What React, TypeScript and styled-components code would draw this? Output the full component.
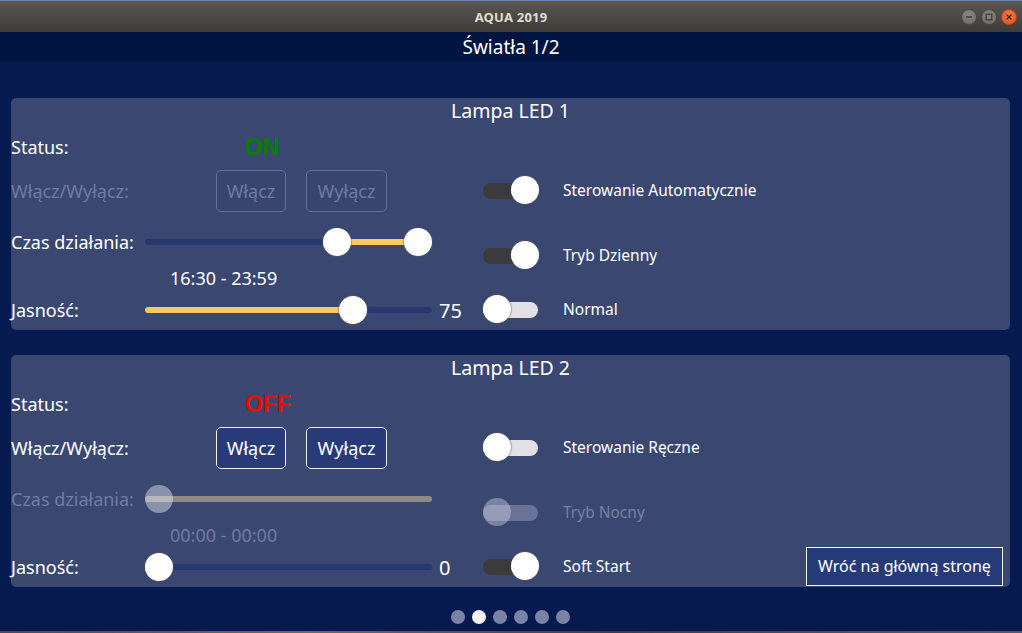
import React from 'react';
import styled, { createGlobalStyle } from 'styled-components';

const Global = createGlobalStyle`
  html, body { margin: 0; padding: 0; background: #061a4f; }
  body { font-family: "Noto Sans", "Open Sans", sans-serif; overflow: hidden; }
  * { box-sizing: border-box; }
`;

const Window = styled.div`
  width: 1022px;
  height: 633px;
  display: flex;
  flex-direction: column;
  background: #061a4f;
`;

const TitleBar = styled.div`
  height: 32px;
  flex: none;
  border-top: 1px solid #6a84ad;
  background: linear-gradient(#5b5852, #3d3b37);
  display: grid;
  grid-template-columns: 1fr auto 1fr;
  align-items: center;
`;

const TitleText = styled.div`
  grid-column: 2;
  color: #dfdbd2;
  font-weight: bold;
  font-size: 13px;
  letter-spacing: 0.2px;
`;

const Controls = styled.div`
  grid-column: 3;
  justify-self: end;
  display: flex;
  gap: 4px;
  margin-right: 5px;
`;

const Ctl = styled.div<{ $close?: boolean }>`
  width: 16px;
  height: 16px;
  border-radius: 50%;
  display: flex;
  align-items: center;
  justify-content: center;
  background: ${(p) => (p.$close ? 'radial-gradient(circle at 50% 35%, #f47a45, #e2521c)' : 'radial-gradient(circle at 50% 35%, #8a8782, #6c6a65)')};
  border: 1px solid ${(p) => (p.$close ? '#b8441a' : '#4a4844')};
`;

const Header = styled.div`
  height: 29px;
  flex: none;
  background: #001442;
  color: #ffffff;
  font-size: 19px;
  display: flex;
  align-items: center;
  justify-content: center;
`;

const Content = styled.div`
  flex: 1;
  display: flex;
  flex-direction: column;
  gap: 25px;
  padding: 37px 12px 0 11px;
`;

const Card = styled.div`
  height: 232px;
  background: #3a4770;
  border-radius: 5px;
  display: grid;
  grid-template-columns: 472px 1fr;
  grid-template-rows: 26px 1fr;
  color: #ffffff;
`;

const CardTitle = styled.div`
  grid-column: 1 / -1;
  text-align: center;
  font-size: 19.5px;
  line-height: 26px;
`;

const Column = styled.div`
  display: flex;
  flex-direction: column;
`;

const Row = styled.div<{ $h: number; $mt?: number }>`
  height: ${(p) => p.$h}px;
  margin-top: ${(p) => p.$mt ?? 0}px;
  display: flex;
  align-items: center;
`;

const Label = styled.div<{ $disabled?: boolean }>`
  width: 134px;
  flex: none;
  font-size: 18px;
  color: ${(p) => (p.$disabled ? '#6f7b9f' : '#ffffff')};
  white-space: nowrap;
`;

const StatusValue = styled.div<{ $on: boolean }>`
  margin-left: 100px;
  font-family: "Liberation Sans", Arial, sans-serif;
  font-weight: bold;
  font-size: 23px;
  color: ${(p) => (p.$on ? '#008000' : '#ff0000')};
`;

const ButtonGroup = styled.div`
  margin-left: 71px;
  display: flex;
  gap: 20px;
`;

const Btn = styled.div<{ $w: number; $disabled?: boolean }>`
  width: ${(p) => p.$w}px;
  height: 42px;
  border-radius: 5px;
  border: 1px solid ${(p) => (p.$disabled ? '#65709a' : '#eeeeee')};
  background: ${(p) => (p.$disabled ? '#38456f' : '#283b78')};
  color: ${(p) => (p.$disabled ? '#6f7b9f' : '#ffffff')};
  font-size: 18px;
  display: flex;
  align-items: center;
  justify-content: center;
`;

const SliderBox = styled.div`
  position: relative;
  width: 287px;
  height: 28px;
  flex: none;
`;

const Track = styled.div<{ $disabled?: boolean }>`
  position: absolute;
  left: 0;
  right: 0;
  top: 11px;
  height: 6px;
  border-radius: 3px;
  background: ${(p) => (p.$disabled ? '#8f8a86' : '#26386f')};
`;

const Fill = styled.div`
  position: absolute;
  top: 11px;
  height: 6px;
  border-radius: 3px;
  background: #fdc85e;
`;

const Handle = styled.div<{ $disabled?: boolean }>`
  position: absolute;
  top: 0;
  width: 28px;
  height: 28px;
  margin-left: -14px;
  border-radius: 50%;
  background: ${(p) => (p.$disabled ? 'rgba(235, 238, 248, 0.45)' : '#ffffff')};
  box-shadow: ${(p) => (p.$disabled ? 'none' : '0 0 1px 1px rgba(90, 90, 90, 0.45)')};
`;

const SliderValue = styled.div`
  margin-left: 7px;
  font-size: 20px;
`;

const TimeText = styled.div<{ $disabled?: boolean }>`
  padding-left: 159px;
  font-size: 18px;
  color: ${(p) => (p.$disabled ? '#6f7b9f' : '#ffffff')};
`;

const ToggleBox = styled.div`
  position: relative;
  width: 56px;
  height: 28px;
  flex: none;
`;

const ToggleTrack = styled.div<{ $on: boolean; $disabled?: boolean }>`
  position: absolute;
  left: 0;
  right: 1px;
  top: 7px;
  height: 16px;
  border-radius: 8px;
  background: ${(p) => (p.$disabled ? '#6a7397' : p.$on ? '#3b3b3d' : '#e1e1e3')};
`;

const Knob = styled.div<{ $on: boolean; $disabled?: boolean }>`
  position: absolute;
  top: 0;
  left: ${(p) => (p.$on ? 28 : 0)}px;
  width: 28px;
  height: 28px;
  border-radius: 50%;
  background: ${(p) => (p.$disabled ? 'rgba(200, 206, 226, 0.45)' : '#ffffff')};
  box-shadow: ${(p) => (p.$disabled ? 'none' : '0 0 1px 1px rgba(90, 90, 90, 0.4)')};
`;

const ToggleLabel = styled.div<{ $disabled?: boolean }>`
  margin-left: 24px;
  font-size: 15.5px;
  color: ${(p) => (p.$disabled ? '#7580a4' : '#ffffff')};
`;

const BackButton = styled.div`
  margin-left: auto;
  margin-right: 7px;
  width: 197px;
  height: 39px;
  border: 1.5px solid #f4f4f4;
  background: #263a78;
  color: #ffffff;
  font-size: 16px;
  display: flex;
  align-items: center;
  justify-content: center;
`;

const Dots = styled.div`
  margin-top: -2px;
  display: flex;
  justify-content: center;
  gap: 7px;
`;

const Dot = styled.div<{ $active?: boolean }>`
  width: 14px;
  height: 14px;
  border-radius: 50%;
  background: ${(p) => (p.$active ? '#f2f2f6' : '#7a83a4')};
`;

const Wallpaper = styled.div`
  height: 2px;
  flex: none;
  background: linear-gradient(90deg, #4b4c43, #6a6a5e 30%, #3e4038 60%, #5c5d52);
`;

const TRAVEL = 287 - 28;
const pos = (f: number) => 14 + f * TRAVEL;

function Toggle({ on, disabled }: { on: boolean; disabled?: boolean }) {
  return (
    <ToggleBox>
      <ToggleTrack $on={on} $disabled={disabled} />
      <Knob $on={on} $disabled={disabled} />
    </ToggleBox>
  );
}

function RangeSlider({ from, to, disabled }: { from: number; to: number; disabled?: boolean }) {
  const a = pos(from);
  const b = pos(to);
  return (
    <SliderBox>
      <Track $disabled={disabled} />
      {!disabled && <Fill style={{ left: a, width: b - a }} />}
      <Handle $disabled={disabled} style={{ left: a }} />
      {!disabled && <Handle style={{ left: b }} />}
    </SliderBox>
  );
}

function ValueSlider({ value }: { value: number }) {
  const x = pos(value / 100);
  return (
    <SliderBox>
      <Track />
      {value > 0 && <Fill style={{ left: 0, width: x }} />}
      <Handle style={{ left: x }} />
    </SliderBox>
  );
}

type Lamp = {
  title: string;
  on: boolean;
  manualEnabled: boolean;
  timeEnabled: boolean;
  from: number;
  to: number;
  time: string;
  brightness: number;
  toggles: { label: string; on: boolean; disabled?: boolean }[];
  back?: boolean;
};

const minutes = (h: number, m: number) => (h * 60 + m) / 1440;

const lamps: Lamp[] = [
  {
    title: 'Lampa LED 1',
    on: true,
    manualEnabled: false,
    timeEnabled: true,
    from: minutes(16, 30),
    to: minutes(23, 59) + 1 / 1440,
    time: '16:30 - 23:59',
    brightness: 75,
    toggles: [
      { label: 'Sterowanie Automatycznie', on: true },
      { label: 'Tryb Dzienny', on: true },
      { label: 'Normal', on: false },
    ],
  },
  {
    title: 'Lampa LED 2',
    on: false,
    manualEnabled: true,
    timeEnabled: false,
    from: 0,
    to: 0,
    time: '00:00 - 00:00',
    brightness: 0,
    toggles: [
      { label: 'Sterowanie Ręczne', on: false },
      { label: 'Tryb Nocny', on: false, disabled: true },
      { label: 'Soft Start', on: true },
    ],
    back: true,
  },
];

const toggleMargins = [52, 37, 26];

function LampCard({ lamp }: { lamp: Lamp }) {
  return (
    <Card>
      <CardTitle>{lamp.title}</CardTitle>
      <Column>
        <Row $h={46}>
          <Label>Status:</Label>
          <StatusValue $on={lamp.on}>{lamp.on ? 'ON' : 'OFF'}</StatusValue>
        </Row>
        <Row $h={42}>
          <Label $disabled={!lamp.manualEnabled}>Włącz/Wyłącz:</Label>
          <ButtonGroup>
            <Btn $w={70} $disabled={!lamp.manualEnabled}>Włącz</Btn>
            <Btn $w={81} $disabled={!lamp.manualEnabled}>Wyłącz</Btn>
          </ButtonGroup>
        </Row>
        <Row $h={48} $mt={6}>
          <Label $disabled={!lamp.timeEnabled}>Czas działania:</Label>
          <RangeSlider from={lamp.from} to={lamp.to} disabled={!lamp.timeEnabled} />
        </Row>
        <Row $h={24}>
          <TimeText $disabled={!lamp.timeEnabled}>{lamp.time}</TimeText>
        </Row>
        <Row $h={40}>
          <Label>Jasność:</Label>
          <ValueSlider value={lamp.brightness} />
          <SliderValue>{lamp.brightness}</SliderValue>
        </Row>
      </Column>
      <Column>
        {lamp.toggles.map((t, i) => (
          <Row key={t.label} $h={28} $mt={toggleMargins[i]}>
            <Toggle on={t.on} disabled={t.disabled} />
            <ToggleLabel $disabled={t.disabled}>{t.label}</ToggleLabel>
            {lamp.back && i === 2 && <BackButton>Wróć na główną stronę</BackButton>}
          </Row>
        ))}
      </Column>
    </Card>
  );
}

export default function App() {
  return (
    <>
      <Global />
      <Window>
        <TitleBar>
          <TitleText>AQUA 2019</TitleText>
          <Controls>
            <Ctl>
              <svg width="8" height="8" viewBox="0 0 8 8"><path d="M1 4h6" stroke="#3a3935" strokeWidth="1.4" /></svg>
            </Ctl>
            <Ctl>
              <svg width="8" height="8" viewBox="0 0 8 8"><rect x="1.2" y="1.2" width="5.6" height="5.6" fill="none" stroke="#3a3935" strokeWidth="1.2" /></svg>
            </Ctl>
            <Ctl $close>
              <svg width="8" height="8" viewBox="0 0 8 8"><path d="M1.5 1.5l5 5M6.5 1.5l-5 5" stroke="#3a2a20" strokeWidth="1.3" /></svg>
            </Ctl>
          </Controls>
        </TitleBar>
        <Header>Światła 1/2</Header>
        <Content>
          {lamps.map((l) => (
            <LampCard key={l.title} lamp={l} />
          ))}
          <Dots>
            {[0, 1, 2, 3, 4, 5].map((i) => (
              <Dot key={i} $active={i === 1} />
            ))}
          </Dots>
        </Content>
        <Wallpaper />
      </Window>
    </>
  );
}
